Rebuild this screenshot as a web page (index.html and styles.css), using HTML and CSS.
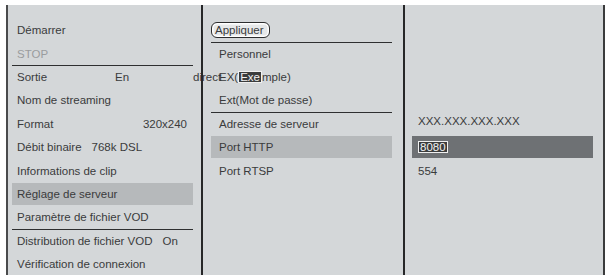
FILE: index.html
```html
<!DOCTYPE html>
<html>
<head>
<meta charset="utf-8">
<link rel="stylesheet" href="styles.css">
</head>
<body>
<div class="panel">
  <div class="col col1">
    <div class="row">Démarrer</div>
    <div class="row dim">STOP</div>
    <div class="row rule"><span class="lab-sortie">Sortie</span><span class="val-en">En</span><span class="over">direct</span></div>
    <div class="row">Nom de streaming</div>
    <div class="row split"><span>Format</span><span>320x240</span></div>
    <div class="row"><span>Débit binaire</span><span class="gap">768k DSL</span></div>
    <div class="row">Informations de clip</div>
    <div class="row sel">Réglage de serveur</div>
    <div class="row">Paramètre de fichier VOD</div>
    <div class="row rule"><span>Distribution de fichier VOD</span><span class="gap">On</span></div>
    <div class="row">Vérification de connexion</div>
  </div>
  <div class="div"></div>
  <div class="col col2">
    <div class="row btnrow"><span class="btn">Appliquer</span></div>
    <div class="row rule">Personnel</div>
    <div class="row">EX(<span class="cur">Exe</span>mple)</div>
    <div class="row">Ext(Mot de passe)</div>
    <div class="row rule">Adresse de serveur</div>
    <div class="row sel">Port HTTP</div>
    <div class="row">Port RTSP</div>
  </div>
  <div class="div"></div>
  <div class="col col3">
    <div class="row"></div>
    <div class="row"></div>
    <div class="row"></div>
    <div class="row"></div>
    <div class="row up">XXX.XXX.XXX.XXX</div>
    <div class="row dark"><span class="cur">8080</span></div>
    <div class="row">554</div>
  </div>
</div>
</body>
</html>
```

FILE: styles.css
```css
html, body {
  margin: 0;
  padding: 0;
  background: #ffffff;
}
body {
  font-family: "Liberation Sans", Arial, sans-serif;
  font-size: 11.5px;
  color: #3a3b3c;
}
.panel {
  margin: 5px 2px 0 6px;
  height: 270px;
  display: grid;
  grid-template-columns: 193px 2px 200px 2px 198px;
  background: #d4d7d9;
  border-left: 2px solid #4a4b4c;
  border-right: 2px solid #3a3b3c;
}
.div {
  background: #262728;
}
.col {
  display: grid;
  grid-template-columns: minmax(0, 1fr);
  grid-auto-rows: 23.4px;
  align-content: start;
  padding-top: 13.5px;
  min-width: 0;
}
.col2, .col3 {
  position: relative;
}
.row {
  display: flex;
  align-items: center;
  white-space: nowrap;
  box-sizing: border-box;
  min-width: 0;
}
.col1 .row {
  margin: 0 8px 0 4px;
  padding-left: 5px;
}
.col2 .row {
  margin: 0 11px 0 8px;
  padding-left: 8px;
}
.col3 .row {
  margin: 0 10px 0 7px;
  padding-left: 6px;
}
.row.rule {
  border-top: 1.5px solid #2e2f30;
}
.row.sel {
  background: #b6b9bb;
  border-top: 1px solid transparent;
  border-bottom: 1.5px solid transparent;
  background-clip: padding-box;
}
.row.dark {
  background: #6e7174;
  border-top: 1px solid transparent;
  border-bottom: 1.5px solid transparent;
  background-clip: padding-box;
}
.row.up {
  padding-bottom: 6px;
}
.dim {
  color: #9a9c9e;
}
.split {
  justify-content: space-between;
  padding-right: 6px;
}
.lab-sortie {
  flex: none;
  width: 98px;
}
.val-en {
  flex: none;
  width: 78px;
}
.over {
  flex: none;
}
.gap {
  margin-left: 10px;
}
.col2 .row.btnrow {
  padding-left: 0;
}
.btn {
  display: inline-block;
  height: 14px;
  line-height: 14px;
  padding: 0 5px 0 3px;
  border: 1px solid #2c2d2e;
  border-radius: 6px;
  background: #e6e8e9;
  box-shadow: inset 0 0 0 1.5px #ffffff;
}
.cur {
  display: inline-block;
  line-height: 10px;
  padding: 0 1px;
  background: #3b3c3d;
  color: #f2f2f2;
  border: 1px solid #f0f0f0;
}
```
